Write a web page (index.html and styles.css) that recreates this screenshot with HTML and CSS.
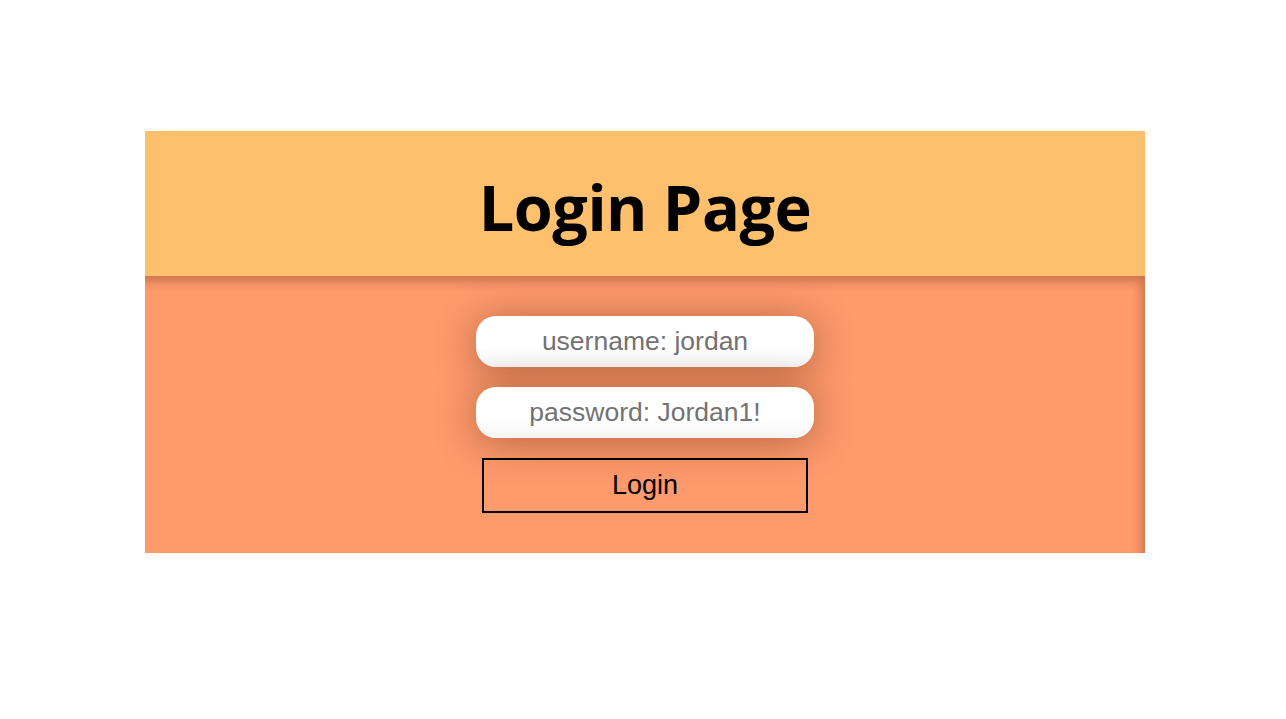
FILE: index.html
```html
<!DOCTYPE html>
<html>
<head>
<meta charset="utf-8">
<link rel="stylesheet" href="styles.css">
</head>
<body>
<div class="page">
  <div class="card">
    <div class="header"><h1 class="title">Login Page</h1></div>
    <div class="form">
      <input class="field" type="text" placeholder="username: jordan">
      <input class="field" type="text" placeholder="password: Jordan1!">
      <button class="btn">Login</button>
    </div>
  </div>
</div>
</body>
</html>
```

FILE: styles.css
```css
html, body { margin: 0; padding: 0; background: #fff; }
.page { padding-top: 131px; padding-left: 4px; display: flex; justify-content: center; }
.card { width: 1000px; display: flex; flex-direction: column; }
.header {
  height: 145px;
  background: #fec06c;
  display: flex;
  align-items: center;
  justify-content: center;
}
.title {
  margin: 0;
  padding-top: 6px;
  font-family: "Open Sans", sans-serif;
  font-weight: 700;
  font-size: 63px;
  color: #000;
  letter-spacing: -0.5px;
}
.form {
  background: #fe9a6c;
  box-shadow: inset -6px 8px 10px -2px rgba(120, 50, 20, 0.35);
  padding: 40px 0;
  display: flex;
  flex-direction: column;
  align-items: center;
  gap: 20px;
}
.field {
  box-sizing: border-box;
  width: 338px;
  height: 51px;
  border: none;
  border-radius: 20px;
  background: linear-gradient(#ffffff 65%, #f5f5f5);
  box-shadow: 0 4px 40px rgba(90, 35, 15, 0.45);
  font-family: "Liberation Sans", Arial, sans-serif;
  font-size: 26.5px;
  text-align: center;
  outline: none;
  padding: 0;
}
.field::placeholder { color: #727272; }
.btn {
  box-sizing: border-box;
  width: 326px;
  height: 55px;
  border: 2px solid #000;
  background: transparent;
  font-family: "Liberation Sans", Arial, sans-serif;
  font-size: 27px;
  color: #000;
  padding: 0;
}
```
